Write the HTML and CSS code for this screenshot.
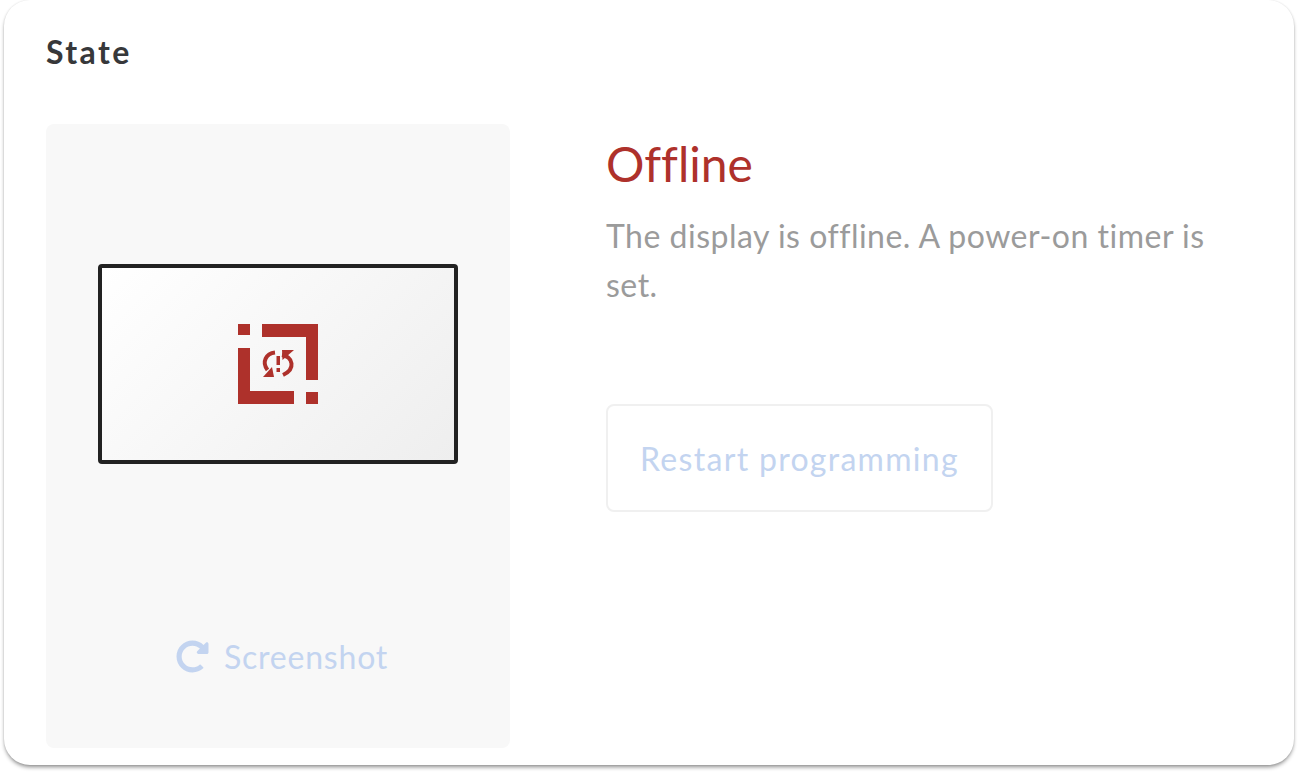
FILE: index.html
```html
<!DOCTYPE html>
<html lang="en">
  <head>
    <meta charset="UTF-8" />
    <meta name="viewport" content="width=device-width, initial-scale=1.0" />
    <title>State</title>
    <link rel="stylesheet" href="styles.css">
  </head>
  <body>
    <div class="state-card">
      <h2 class="state-title">State</h2>
      <div class="state-content">
        <div class="preview">
          <div class="preview-main">
            <div class="display">
              <svg class="display-icon" viewBox="0 0 80 80" width="80" height="80">
                <path class="icon-fill" d="M0 0H12V11H0Z M24 0H80V56H68V13H24Z M0 24H12V67H56V80H0Z M68 68H80V80H68Z" />
                <path class="icon-fill" d="M38.5 32H42V41H38.5Z M38.5 44H42V48H38.5Z" />
                <path class="icon-arc" d="M37 28.500C28 29.500 23.500 38 29.500 46" />
                <path class="icon-fill" d="M25 53L36 53L34 43Z" />
                <path class="icon-arc" d="M44 31C55 33 58 45 45 51" />
                <path class="icon-fill" d="M44 26L56 26L44.500 36Z" />
              </svg>
            </div>
          </div>
          <button class="screenshot-btn" type="button">
            <svg class="screenshot-icon" viewBox="0 0 512 512" width="33" height="33">
              <path d="M256.455 8c66.269.119 126.437 26.233 170.859 68.685l35.715-35.715C478.149 25.851 504 36.559 504 57.941V192c0 13.255-10.745 24-24 24H345.941c-21.382 0-32.09-25.851-16.971-40.971l41.75-41.750c-30.864-28.899-70.801-44.907-113.23-45.273-92.398-.798-170.283 73.977-169.484 169.442C88.764 348.009 162.184 424 256 424c41.127 0 79.997-14.678 110.629-41.556 4.743-4.161 11.906-3.908 16.368.553l39.662 39.662c4.872 4.872 4.631 12.815-.482 17.433C378.202 479.813 319.926 504 256 504 119.034 504 8.001 392.967 8 256.002 7.999 119.193 119.646 7.755 256.455 8z" />
            </svg>
            Screenshot
          </button>
        </div>
        <div class="state-info">
          <div class="state-name">Offline</div>
          <p class="state-desc">The display is offline. A power-on timer is set.</p>
          <button class="restart-btn" type="button">Restart programming</button>
        </div>
      </div>
    </div>
  </body>
</html>
```

FILE: styles.css
```css
html,
body {
  height: 772px;
  overflow: hidden;
}

body {
  font-family: Lato, "Noto Sans", sans-serif;
  font-variant-ligatures: none;
  margin: 0;
  padding: 0 4px;
  box-sizing: border-box;
  background-color: #fff;
}

button {
  font-family: inherit;
  font-variant-ligatures: none;
}

.state-card {
  height: 765px;
  box-sizing: border-box;
  padding: 34px 42px 17px;
  display: flex;
  flex-direction: column;
  background-color: #fff;
  border-radius: 26px;
  box-shadow: 0 3px 4px -1px rgba(0, 0, 0, 0.45), 0 0 2px rgba(0, 0, 0, 0.12);
}

.state-title {
  margin: 0 0 54px;
  height: 36px;
  line-height: 36px;
  font-size: 32px;
  font-weight: 700;
  letter-spacing: 2.4px;
  color: #37383a;
}

.state-content {
  flex: 1;
  display: flex;
  gap: 96px;
}

.preview {
  width: 464px;
  display: flex;
  flex-direction: column;
  align-items: center;
  background-color: #f8f8f8;
  border-radius: 8px;
}

.preview-main {
  padding-top: 140px;
  flex: 1;
}

.display {
  width: 360px;
  height: 200px;
  box-sizing: border-box;
  display: flex;
  align-items: center;
  justify-content: center;
  border: 4px solid #222;
  border-radius: 4px;
  background: linear-gradient(135deg, #fff, #eeeeee);
}

.icon-fill {
  fill: #ae312b;
}

.icon-arc {
  fill: none;
  stroke: #ae312b;
  stroke-width: 4;
}

.screenshot-btn {
  display: flex;
  align-items: center;
  gap: 15px;
  margin-bottom: 72px;
  padding: 0 0 0 8px;
  border: none;
  background: none;
  color: #c3d4f0;
  font-size: 32px;
  letter-spacing: 0.8px;
}

.screenshot-icon {
  fill: #c3d4f0;
}

.state-info {
  flex: 1;
}

.state-name {
  height: 80px;
  line-height: 80px;
  font-size: 48px;
  color: #ae312b;
}

.state-desc {
  width: 620px;
  margin: 7px 0 95px;
  font-size: 32px;
  line-height: 49px;
  letter-spacing: 0.5px;
  color: #9b9b9b;
}

.restart-btn {
  display: block;
  width: 387px;
  height: 108px;
  box-sizing: border-box;
  border: 2px solid #f0f0f0;
  border-radius: 8px;
  background: #fff;
  color: #c3d4f0;
  font-size: 32px;
  letter-spacing: 1.3px;
}
```
